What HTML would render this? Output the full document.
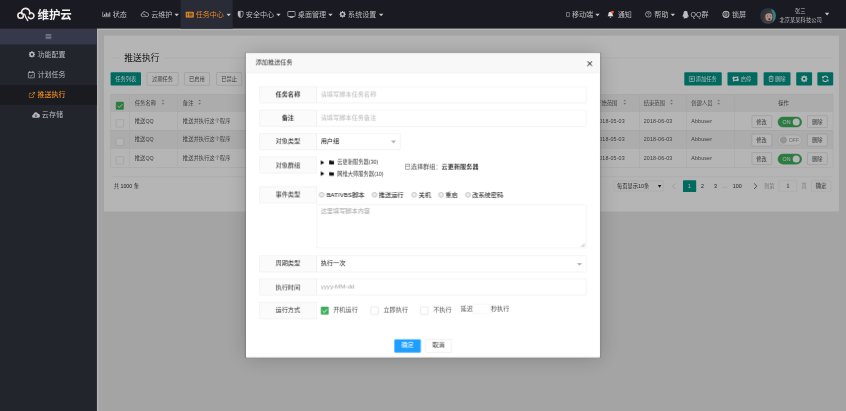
<!DOCTYPE html>
<html lang="zh-CN">
<head>
<meta charset="utf-8">
<title>维护云 - 推送执行</title>
<style>
*{box-sizing:border-box;margin:0;padding:0}
html,body{width:846px;height:411px;overflow:hidden;background:#23252d}
body{font-family:"Liberation Sans","Noto Sans CJK SC",sans-serif;color:#333}
#s{position:absolute;left:0;top:0;width:1920px;height:933px;transform:scale3d(0.440625,0.440625,1) rotateX(0.01deg);transform-origin:0 0}
#bg{left:200px;top:40px;width:1730px;height:900px;background:#e7e7e7}
.a{position:absolute;white-space:nowrap}
svg{display:block;position:absolute}
/* header */
#hd{left:0;top:0;width:1920px;height:65px;background:#1a1b22}
#hd .t{top:0;height:65px;line-height:66px;font-size:16px;color:#bcbcc0}
#hd .cr{width:0;height:0;border:5px solid transparent;border-top:6px solid #c4c4c8;border-bottom:none;top:31px}
#hd svg{top:24px}
/* side */
#sd{left:0;top:0;width:220px;height:940px;background:#23252d}
#tg{left:0;top:40px;width:220px;height:61px;background:#353949}
.si{left:0;width:220px;height:45px;line-height:46px;font-size:16px;color:#b9b9bd}
.si svg{top:15px}
.si.on{background:#1a1b21;color:#e88c22}
/* main */
#card{left:236px;top:81px;width:1668px;height:399px;background:#fff}
.btn{height:30px;line-height:30px;font-size:12px;color:#fff;background:#009688;text-align:center;border-radius:2px}
.btn.w{background:#fff;border:1px solid #c9c9c9;color:#555;line-height:28px}
.btn svg{top:7px}
.th{top:214px;height:39px;line-height:41px;font-size:12px;color:#555}
.td{height:42px;line-height:42px;font-size:12px;color:#555}
.en{letter-spacing:.35px}
.vl{top:214px;width:1px;height:166px;background:#e6e6e6}
.hl{left:251px;width:1640px;height:1px;background:#e6e6e6}
.cb{width:18px;height:18px;border:1px solid #d2d2d2;background:#fff;border-radius:2px}
.cb.on{background:#3fae5c;border-color:#3fae5c}
.sb{height:28px;line-height:28px;font-size:12px;border:1px solid #c9c9c9;background:#fff;color:#555;text-align:center;border-radius:2px;width:46px}
.sw{width:55px;height:24px;border-radius:12px;font-size:12px;line-height:22px}
.sw.on{background:#3fae5c;border:1px solid #3fae5c;color:#fff}
.sw.off{background:#fff;border:1px solid #d2d2d2;color:#999}
.sw i{position:absolute;top:3px;width:16px;height:16px;border-radius:8px}
.sw.on i{right:4px;background:#fff}
.sw.off i{left:4px;background:#d2d2d2}
.so{width:0;height:0}
.so:before,.so:after{content:"";position:absolute;left:0;border:3px solid transparent}
.so:before{top:-7px;border-bottom:4px solid #a0a0a0;border-top:none}
.so:after{top:1px;border-top:4px solid #a0a0a0;border-bottom:none}
.pg{top:409px;height:28px;line-height:28px;font-size:12px;color:#333}
#shade{left:220px;top:65px;width:1710px;height:880px;background:rgba(0,0,0,.29)}
/* modal */
#md{left:558px;top:121px;width:804px;height:690px;background:#fff;box-shadow:1px 1px 50px rgba(0,0,0,.2),0 0 3px rgba(0,0,0,.3);border-radius:2px}
#mi{left:2px;top:1.7px;width:800px;height:688px}
#mt{left:-2px;top:-1.7px;width:803px;height:44px;padding-top:1px;background:#f8f8f8;border-bottom:1px solid #eee;line-height:41px;font-size:14px;color:#333;padding-left:22px}
.lb{left:28px;width:131px;height:38px;line-height:35px;border:1px solid #e6e6e6;background:#fbfbfb;text-align:center;font-size:14px;color:#333;border-radius:2px 0 0 2px}
.in{left:158px;width:612.5px;height:38px;line-height:35px;border:1px solid #e6e6e6;background:#fff;font-size:14px;color:#bbb;padding-left:9px;border-radius:0 2px 2px 0}
.mx{font-size:14px;color:#444;height:38px;line-height:38px}
.rd{width:12px;height:12px;border-radius:50%;border:1px solid #8c8c8c;background:#ececec}
.dc{width:0;height:0;border:6px solid transparent;border-top:6px solid #b0b0b0;border-bottom:none}
</style>
</head>
<body>
<div id="s">
<div id="bg" class="a"></div>
<div class="a" style="left:220px;top:65px;width:1700px;height:3px;background:#fff"></div><div class="a" style="left:220px;top:65px;width:3px;height:870px;background:#fff"></div>
<div id="card" class="a"></div>
<!-- fieldset title -->
<div class="a" style="left:252px;top:131px;width:1638px;height:1px;background:#e6e6e6"></div>
<div class="a" style="left:272px;top:113px;height:36px;line-height:36px;padding:0 10px;background:#fff;font-size:20px;font-weight:400;color:#222">推送执行</div>
<!-- toolbar left -->
<div class="a btn" style="left:251px;top:164px;width:69px;height:30px;line-height:31px">任务列表</div>
<div class="a btn w" style="left:333px;top:164px;width:72px;height:30px;line-height:29px">过期任务</div>
<div class="a btn w" style="left:418px;top:164px;width:58px;height:30px;line-height:29px">已启用</div>
<div class="a btn w" style="left:491px;top:164px;width:58px;height:30px;line-height:29px">已禁止</div>
<!-- toolbar right -->
<div class="a btn" style="left:1553px;top:164px;width:85px;height:30px;line-height:31px;text-align:left;padding-left:26px"><svg style="left:10px;top:7.500px" width="14" height="14" viewBox="0 0 14 14"><rect x="0.900" y="0.900" width="12.200" height="12.200" rx="1.500" fill="none" stroke="#fff" stroke-width="1.700"/><path d="M7 3.300v7.400M3.300 7h7.400" stroke="#fff" stroke-width="1.700"/></svg>添加任务</div>
<div class="a btn" style="left:1651px;top:164px;width:68px;height:30px;line-height:31px;text-align:left;padding-left:30px"><svg style="left:10px;top:8px" width="17" height="14" viewBox="0 0 16 13"><path d="M3.600 12V3.400h7.200M12.400 1v8.600H5.200" fill="none" stroke="#fff" stroke-width="2.700"/><path d="M0 5.800L3.600 0.800l3.600 5zM16 7.200l-3.600 5l-3.600-5z" fill="#fff"/></svg>启停</div>
<div class="a btn" style="left:1733px;top:164px;width:61px;height:30px;line-height:31px;text-align:left;padding-left:26px"><svg style="left:11px;top:7px" width="12" height="15" viewBox="0 0 12 14"><path d="M0.500 3h11M4 3V1h4v2M1.800 3v9.500a1 1 0 0 0 1 1h6.400a1 1 0 0 0 1-1V3" fill="none" stroke="#fff" stroke-width="1.800"/><path d="M3.500 7.500h5" stroke="#fff" stroke-width="1.600"/></svg>删除</div>
<div class="a btn" style="left:1807px;top:164px;width:36px;height:30px"><svg style="left:10px;top:7px" width="16" height="16" viewBox="0 0 16 16"><circle cx="8" cy="8" r="4.600" fill="none" stroke="#fff" stroke-width="3.600"/><path d="M8 0v16M0 8h16M2.300 2.300l11.400 11.400M13.700 2.300L2.300 13.700" stroke="#fff" stroke-width="2.800" stroke-dasharray="2.600 10.800"/></svg></div>
<div class="a btn" style="left:1855px;top:164px;width:36px;height:30px"><svg style="left:10px;top:7px" width="16" height="16" viewBox="0 0 15 15"><path d="M13 6A5.800 5.800 0 0 0 2.500 4.500M2 9a5.800 5.800 0 0 0 10.500 1.500" fill="none" stroke="#fff" stroke-width="2.600"/><path d="M0.300 0.800v5.400h5.400zM14.700 14.200V8.800h-5.400z" fill="#fff"/></svg></div>
<!-- table -->
<div class="a" style="left:251px;top:214px;width:1640px;height:39px;background:#f2f2f2"></div>
<div class="a" style="left:251px;top:295px;width:1640px;height:42px;background:#f2f2f2"></div>
<div class="a hl" style="top:214px"></div><div class="a hl" style="top:253px"></div><div class="a hl" style="top:295px"></div><div class="a hl" style="top:337px"></div><div class="a hl" style="top:380px"></div>
<div class="a vl" style="left:251px"></div><div class="a vl" style="left:294px"></div><div class="a vl" style="left:403px"></div><div class="a vl" style="left:640px"></div><div class="a vl" style="left:790px"></div><div class="a vl" style="left:940px"></div><div class="a vl" style="left:1090px"></div><div class="a vl" style="left:1240px"></div><div class="a vl" style="left:1345px"></div><div class="a vl" style="left:1451px"></div><div class="a vl" style="left:1557px"></div><div class="a vl" style="left:1666px"></div><div class="a vl" style="left:1890px"></div>
<div class="a cb on" style="left:263px;top:231px"><svg style="left:2px;top:3px" width="13" height="11" viewBox="0 0 13 11"><path d="M1.500 5.500l3.500 3.500l6.500-7.500" fill="none" stroke="#fff" stroke-width="2"/></svg></div>
<div class="a cb" style="left:263px;top:271px"></div><div class="a cb" style="left:263px;top:313px"></div><div class="a cb" style="left:263px;top:355px"></div>
<div class="a th" style="left:306px">任务名称</div><div class="a so" style="left:367px;top:233px"></div>
<div class="a th" style="left:415px">备注</div><div class="a so" style="left:450px;top:233px"></div>
<div class="a th" style="left:652px">对象类型</div><div class="a th" style="left:802px">事件类型</div><div class="a th" style="left:952px">周期类型</div><div class="a th" style="left:1102px">执行时间</div><div class="a th" style="left:1252px">运行方式</div>
<div class="a th" style="left:1353px">开始范围</div><div class="a so" style="left:1415px;top:233px"></div>
<div class="a th" style="left:1461px">结束范围</div><div class="a so" style="left:1521px;top:233px"></div>
<div class="a th" style="left:1569px">创建人员</div><div class="a so" style="left:1628px;top:233px"></div>
<div class="a th" style="left:1766px">操作</div>
<!-- rows -->
<div class="a td" style="left:306px;top:254px">推送QQ</div><div class="a td" style="left:415px;top:254px">推送并执行这个程序</div><div class="a td" style="left:652px;top:254px">用户组</div><div class="a td" style="left:802px;top:254px">推送运行</div><div class="a td" style="left:952px;top:254px">执行一次</div><div class="a td" style="left:1102px;top:254px">2018-05-03</div><div class="a td" style="left:1252px;top:254px">开机运行</div><div class="a td en" style="left:1353px;top:254px">2018-05-03</div><div class="a td en" style="left:1461px;top:254px">2018-06-03</div><div class="a td en" style="left:1569px;top:254px">Abbuser</div>
<div class="a td" style="left:306px;top:296px">推送QQ</div><div class="a td" style="left:415px;top:296px">推送并执行这个程序</div><div class="a td" style="left:652px;top:296px">用户组</div><div class="a td" style="left:802px;top:296px">推送运行</div><div class="a td" style="left:952px;top:296px">执行一次</div><div class="a td" style="left:1102px;top:296px">2018-05-03</div><div class="a td" style="left:1252px;top:296px">开机运行</div><div class="a td en" style="left:1353px;top:296px">2018-05-03</div><div class="a td en" style="left:1461px;top:296px">2018-06-03</div><div class="a td en" style="left:1569px;top:296px">Abbuser</div>
<div class="a td" style="left:306px;top:338px">推送QQ</div><div class="a td" style="left:415px;top:338px">推送并执行这个程序</div><div class="a td" style="left:652px;top:338px">用户组</div><div class="a td" style="left:802px;top:338px">推送运行</div><div class="a td" style="left:952px;top:338px">执行一次</div><div class="a td" style="left:1102px;top:338px">2018-05-03</div><div class="a td" style="left:1252px;top:338px">开机运行</div><div class="a td en" style="left:1353px;top:338px">2018-05-03</div><div class="a td en" style="left:1461px;top:338px">2018-06-03</div><div class="a td en" style="left:1569px;top:338px">Abbuser</div>
<!-- ops -->
<div class="a sb" style="left:1705.500px;top:262px">修改</div><div class="a sw on" style="left:1765px;top:264.5px;padding-left:10px">ON<i></i></div><div class="a sb" style="left:1832px;top:262px">删除</div>
<div class="a sb" style="left:1705.500px;top:304px">修改</div><div class="a sw off" style="left:1765px;top:306px;padding-left:24px">OFF<i></i></div><div class="a sb" style="left:1832px;top:304px">删除</div>
<div class="a sb" style="left:1705.500px;top:346px">修改</div><div class="a sw on" style="left:1765px;top:348.5px;padding-left:10px">ON<i></i></div><div class="a sb" style="left:1832px;top:346px">删除</div>
<!-- footer -->
<div class="a" style="left:252px;top:401px;width:1638px;height:1px;background:#e6e6e6"></div>
<div class="a pg" style="left:258px">共 1000 条</div>
<div class="a pg" style="left:1393px;top:410px;width:113px;height:24px;line-height:22px;border:1px solid #e2e2e2;background:#fff;padding-left:6px;border-radius:2px">每页显示10条</div>
<div class="a" style="left:1493px;top:420px;width:0;height:0;border:4px solid transparent;border-top:6px solid #222;border-bottom:none"></div>
<svg style="left:1525px;top:415px" width="9" height="15" viewBox="0 0 9 15"><path d="M7.500 1L1.500 7.500l6 6.500" fill="none" stroke="#d2d2d2" stroke-width="1.600"/></svg>
<div class="a pg" style="left:1550px;width:30px;height:27px;line-height:27px;background:#009688;color:#fff;text-align:center;border-radius:2px">1</div>
<div class="a pg" style="left:1584px;width:20px;text-align:center">2</div>
<div class="a pg" style="left:1614px;width:20px;text-align:center">3</div>
<div class="a pg" style="left:1635px;width:20px;text-align:center;color:#999">…</div>
<div class="a pg" style="left:1658px;width:30px;text-align:center">100</div>
<svg style="left:1710px;top:415px" width="9" height="15" viewBox="0 0 9 15"><path d="M1.500 1l6 6.500l-6 6.500" fill="none" stroke="#333" stroke-width="1.600"/></svg>
<div class="a pg" style="left:1734px;color:#aaa">到第</div>
<div class="a pg" style="left:1767px;top:409px;width:42px;height:26px;line-height:24px;border:1px solid #e2e2e2;background:#fff;text-align:center;border-radius:2px">1</div>
<div class="a pg" style="left:1819px;color:#aaa">页</div>
<div class="a pg" style="left:1841px;top:409px;width:45px;height:26px;line-height:24px;border:1px solid #e2e2e2;background:#fff;text-align:center;border-radius:2px">确定</div>

<div id="shade" class="a"></div>
<div id="md" class="a"><div id="mi" class="a">
  <div id="mt" class="a">添加推送任务</div>
  <svg style="left:771.500px;top:15px" width="13" height="13" viewBox="0 0 12 12"><path d="M1 1l10 10M11 1L1 11" stroke="#111" stroke-width="2"/></svg>
  <!-- row1 -->
  <div class="a lb" style="top:73.5px;font-weight:500;color:#111">任务名称</div><div class="a in" style="top:73.5px">请填写脚本任务名称</div>
  <!-- row2 -->
  <div class="a lb" style="top:126.5px;font-weight:500;color:#111">备注</div><div class="a in" style="top:126.5px">请填写脚本任务备注</div>
  <!-- row3 -->
  <div class="a lb" style="top:179.5px">对象类型</div><div class="a in" style="top:179.5px;width:191px;color:#111">用户组</div>
  <div class="a dc" style="left:327px;top:196px"></div>
  <!-- row4 -->
  <div class="a lb" style="top:232.5px;line-height:37px">对象群组</div>
  <div class="a" style="left:168px;top:241px;width:0;height:0;border:5px solid transparent;border-left:8px solid #000;border-right:none"></div>
  <svg style="left:187px;top:241px" width="11" height="9" viewBox="0 0 11 9"><path d="M0 0h4.200l1 1.400H11V9H0z" fill="#111"/></svg>
  <div class="a" style="left:205px;top:236px;font-size:12px;line-height:18px;color:#333">云更新服务器(30)</div>
  <div class="a" style="left:168px;top:266px;width:0;height:0;border:5px solid transparent;border-left:8px solid #000;border-right:none"></div>
  <svg style="left:187px;top:267px" width="11" height="9" viewBox="0 0 11 9"><path d="M0 0h4.200l1 1.400H11V9H0z" fill="#111"/></svg>
  <div class="a" style="left:205px;top:262px;font-size:12px;line-height:18px;color:#333">网维大师服务器(10)</div>
  <div class="a mx" style="left:358px;top:235px;color:#555">已选择群组：<span style="color:#111;font-weight:500">云更新服务器</span></div>
  <!-- row5 -->
  <div class="a lb" style="top:300.5px">事件类型</div>
  <div class="a rd" style="left:164px;top:313px"></div><div class="a mx" style="left:181px;top:299px;color:#111">BAT/VBS脚本</div>
  <div class="a rd" style="left:284px;top:313px"></div><div class="a mx" style="left:300px;top:299px;color:#111">推送运行</div>
  <div class="a rd" style="left:374px;top:313px"></div><div class="a mx" style="left:390px;top:299px;color:#111">关机</div>
  <div class="a rd" style="left:435px;top:313px"></div><div class="a mx" style="left:451px;top:299px;color:#111">重启</div>
  <div class="a rd" style="left:496px;top:313px"></div><div class="a mx" style="left:512px;top:299px;color:#111">改系统密码</div>
  <div class="a in" style="top:341.500px;height:99px;line-height:20px;padding-top:3px;border-radius:2px;color:#a6a6a6">这里填写脚本内容</div>
  <svg style="left:758px;top:428px" width="10" height="10" viewBox="0 0 10 10"><path d="M9.500 1L1 9.500M9.500 5.500l-4 4" stroke="#8a8a8a" stroke-width="1.200"/></svg>
  <!-- row6 -->
  <div class="a lb" style="top:457px;line-height:33px">周期类型</div><div class="a in" style="top:457px;color:#111;line-height:33px">执行一次</div>
  <div class="a dc" style="left:749px;top:474px"></div>
  <!-- row7 -->
  <div class="a lb" style="top:509.500px;line-height:37px">执行时间</div><div class="a in" style="top:509.500px;color:#a2a2a2">yyyy-MM-dd</div>
  <!-- row8 -->
  <div class="a lb" style="top:563px;line-height:33px">运行方式</div>
  <div class="a cb on" style="left:168px;top:573px"><svg style="left:2px;top:3px" width="13" height="11" viewBox="0 0 13 11"><path d="M1.500 5.500l3.500 3.500l6.500-7.500" fill="none" stroke="#fff" stroke-width="2"/></svg></div><div class="a mx" style="left:196px;top:561px;color:#555">开机运行</div>
  <div class="a cb" style="left:281px;top:573px"></div><div class="a mx" style="left:310px;top:561px;color:#555">立即执行</div>
  <div class="a cb" style="left:394px;top:573px"></div><div class="a mx" style="left:423px;top:561px;color:#555">不执行</div>
  <div class="a mx" style="left:485px;top:558.500px;color:#555">延迟</div>
  <div class="a" style="left:513px;top:567px;width:40px;height:22px;border:1px solid #ededed;background:#fff"></div>
  <div class="a mx" style="left:554px;top:558.500px;color:#555">秒执行</div>
  <!-- buttons -->
  <div class="a" style="left:335px;top:647px;width:60px;height:30px;line-height:26px;background:#1e9fff;color:#fff;font-size:14px;text-align:center;border-radius:2px">确定</div>
  <div class="a" style="left:405px;top:647px;width:60px;height:30px;line-height:24px;background:#fff;border:1px solid #dedede;color:#333;font-size:14px;text-align:center;border-radius:2px">取消</div>
</div></div>
<div id="sd" class="a">
  <div id="tg" class="a"><svg style="left:103px;top:37px" width="14" height="12" viewBox="0 0 14 12"><path d="M0 1h14M0 4.4h14M0 7.8h14M0 11.2h14" stroke="#8d92a3" stroke-width="1.8"/></svg></div>
  <div class="a si" style="top:101px"><svg style="left:65px" width="15" height="15" viewBox="0 0 16 16"><circle cx="8" cy="8" r="4.6" fill="none" stroke="#b9b9bd" stroke-width="3.4"/><path d="M8 0v16M0 8h16M2.3 2.3l11.4 11.4M13.7 2.3L2.3 13.7" stroke="#b9b9bd" stroke-width="2.6" stroke-dasharray="2.6 10.8"/></svg><span class="a" style="left:85px">功能配置</span></div>
  <div class="a si" style="top:147px"><svg style="left:63px;top:14px" width="16" height="17" viewBox="0 0 16 17"><rect x="1" y="3" width="14" height="13" rx="1.5" fill="none" stroke="#b9b9bd" stroke-width="2"/><path d="M4.5 0.5v4M11.5 0.5v4" stroke="#b9b9bd" stroke-width="2"/><path d="M5 10l2.2 2.2L11 8.4" fill="none" stroke="#b9b9bd" stroke-width="1.8"/></svg><span class="a" style="left:85px">计划任务</span></div>
  <div class="a si on" style="top:193px"><svg style="left:65px;top:15px" width="15" height="15" viewBox="0 0 18 17"><path d="M13 10v4.5a1.5 1.5 0 0 1-1.5 1.500h-9a1.500 1.500 0 0 1-1.500-1.500v-9a1.500 1.500 0 0 1 1.500-1.500h5" fill="none" stroke="#e58a24" stroke-width="2"/><path d="M10.500 1h6.500v6.500M17 1L8 10" fill="none" stroke="#e58a24" stroke-width="2.200"/></svg><span class="a" style="left:85px;font-weight:500">推送执行</span></div>
  <div class="a si" style="top:238px"><svg style="left:72px;top:16px" width="19" height="14" viewBox="0 0 19 14"><path d="M4.500 13.500a4 4 0 0 1-0.600-7.900a5.500 5.500 0 0 1 10.600-1.200a4.600 4.600 0 0 1 0.500 9.100z" fill="#b9b9bd"/><path d="M9.500 5v5.500M7 8.200l2.500 2.600l2.500-2.600" fill="none" stroke="#23252d" stroke-width="1.600"/></svg><span class="a" style="left:95px">云存储</span></div>
</div>

<div id="hd" class="a">
  <!-- logo -->
  <svg style="left:36px;top:14px" width="46" height="36" viewBox="36 14 46 36"><g fill="none" stroke="#f0e7e3" stroke-width="3.600" stroke-linecap="round"><circle cx="46.800" cy="35.300" r="6.300"/><path d="M49 31 A9.500 9.500 0 1 1 67.200 31.500"/><path d="M67.200 30 A6.600 6.600 0 1 1 64.500 38.500"/><path d="M55.800 32 C57.500 38 60 43 63 46.500" stroke-width="3"/></g></svg>
  <div class="a" style="left:85px;top:2px;height:65px;line-height:65px;font-size:26px;font-weight:700;color:#f1f1f1">维护云</div>
  <!-- active tab -->
  <div class="a" style="left:410px;top:0;width:118px;height:65px;background:#292b36"></div>
  <!-- 状态 -->
  <svg style="left:232px;top:26px" width="19" height="13" viewBox="0 0 19 16" preserveAspectRatio="none"><path d="M1 0v15h18" fill="none" stroke="#bcbcc0" stroke-width="2"/><path d="M4 8h2.6v5H4zM8 3h2.6v10H8zM12 6h2.6v7H12zM16 2h2.4v11H16z" fill="#bcbcc0"/></svg>
  <div class="a t" style="left:256px">状态</div>
  <!-- 云维护 -->
  <svg style="left:318px;top:25px" width="21" height="15" viewBox="0 0 42 33"><path d="M13 27.5 H10.5 A8 8 0 0 1 9.5 11.6 A9.5 9.5 0 0 1 27.5 8.6 A8 8 0 0 1 38.5 16.2 A7.2 7.2 0 0 1 31.5 27.5 H26" fill="none" stroke="#bcbcc0" stroke-width="4.2" stroke-linecap="round"/><path d="M14 15.5 C20 15 23.5 19 23 23.5 C22.6 27 21 29.5 18 31" fill="none" stroke="#bcbcc0" stroke-width="3.6" stroke-linecap="round"/></svg>
  <div class="a t" style="left:343px">云维护</div>
  <div class="a cr" style="left:396px"></div>
  <!-- 任务中心 -->
  <svg style="left:421px;top:26px" width="19" height="14" viewBox="0 0 19 14"><rect x="0" y="0" width="19" height="14" rx="2" fill="#e58a24"/><path d="M3 4h3M8 4h8M3 7h3M8 7h8M3 10h3M8 10h8" stroke="#292b36" stroke-width="1.6"/></svg>
  <div class="a t" style="left:444px;color:#e58a24">任务中心</div>
  <div class="a cr" style="left:514px"></div>
  <!-- 安全中心 -->
  <svg style="left:539px" width="14" height="17" viewBox="0 0 14 17"><path d="M7 0.8 L13 2.6 V8.5 C13 12.5 10 15 7 16.3 C4 15 1 12.5 1 8.5 V2.6 Z" fill="none" stroke="#bcbcc0" stroke-width="1.8"/><path d="M7 0.8 V16.3 C4 15 1 12.5 1 8.5 V2.6 Z" fill="#bcbcc0"/></svg>
  <div class="a t" style="left:558px">安全中心</div>
  <div class="a cr" style="left:627px"></div>
  <!-- 桌面管理 -->
  <svg style="left:652px;top:25px" width="19" height="16" viewBox="0 0 19 16"><rect x="1" y="1" width="17" height="11.5" rx="1.5" fill="none" stroke="#bcbcc0" stroke-width="2"/><path d="M5.5 15h8" stroke="#bcbcc0" stroke-width="2"/></svg>
  <div class="a t" style="left:676px">桌面管理</div>
  <div class="a cr" style="left:745px"></div>
  <!-- 系统设置 -->
  <svg style="left:770px;top:25px" width="15" height="15" viewBox="0 0 16 16"><circle cx="8" cy="8" r="4.6" fill="none" stroke="#bcbcc0" stroke-width="3.4"/><path d="M8 0v16M0 8h16M2.3 2.3l11.4 11.4M13.7 2.3L2.3 13.7" stroke="#bcbcc0" stroke-width="2.6" stroke-dasharray="2.6 10.8"/></svg>
  <div class="a t" style="left:790px">系统设置</div>
  <div class="a cr" style="left:860px"></div>
  <!-- 移动端 -->
  <svg style="left:1285px;top:27px" width="8" height="12" viewBox="0 0 8 12"><rect x="0.8" y="0.8" width="6.4" height="10.4" rx="1" fill="none" stroke="#bcbcc0" stroke-width="1.6"/></svg>
  <div class="a t" style="left:1298px">移动端</div>
  <div class="a cr" style="left:1351px"></div>
  <!-- 通知 -->
  <svg style="left:1378px;top:23px" width="17" height="18" viewBox="0 0 17 18"><path d="M7.5 3.5 C4 3.8 2.8 6.5 2.8 9 C2.8 12 1.5 13 0.8 14 H14.2 C13.5 13 12.2 12 12.2 9 C12.2 6.5 11 3.8 7.5 3.5Z" fill="#dcdcdc"/><path d="M5.5 15.2a2 2 0 0 0 4 0z" fill="#dcdcdc"/><circle cx="12" cy="4.500" r="3.300" fill="#f4511e"/></svg>
  <div class="a t" style="left:1402px">通知</div>
  <!-- 帮助 -->
  <svg style="left:1464px;top:25px" width="15" height="15" viewBox="0 0 15 15"><circle cx="7.5" cy="7.5" r="6.5" fill="none" stroke="#bcbcc0" stroke-width="1.7"/><path d="M5.4 6 C5.4 3.3 9.6 3.3 9.6 6 C9.6 7.5 7.5 7.6 7.5 9.3" fill="none" stroke="#bcbcc0" stroke-width="1.5"/><rect x="6.7" y="10.2" width="1.6" height="1.6" fill="#bcbcc0"/></svg>
  <div class="a t" style="left:1485px">帮助</div>
  <div class="a cr" style="left:1522px"></div>
  <!-- QQ群 -->
  <svg style="left:1548px;top:24px" width="16" height="18" viewBox="0 0 16 18"><path d="M8 0.5 C4.6 0.5 3.4 3 3.4 6 C3.4 7 3.3 7.6 2.6 8.8 C1.4 10.6 0.6 12.5 1 14.2 C1.4 14.6 2.2 13.6 2.8 12.8 C3 14 3.6 15 4.4 15.7 C3.6 16 3 16.4 3 17 C3 17.7 5.5 17.8 8 17.8 C10.5 17.8 13 17.7 13 17 C13 16.4 12.4 16 11.6 15.7 C12.4 15 13 14 13.2 12.8 C13.8 13.6 14.6 14.6 15 14.2 C15.4 12.5 14.6 10.6 13.4 8.8 C12.7 7.6 12.6 7 12.6 6 C12.6 3 11.4 0.5 8 0.5Z" fill="#bcbcc0"/></svg>
  <div class="a t" style="left:1567px">QQ群</div>
  <!-- 锁屏 -->
  <svg style="left:1639px;top:24px" width="17" height="17" viewBox="0 0 17 17"><circle cx="8.500" cy="8.500" r="7" fill="none" stroke="#b9b9bd" stroke-width="2.600"/><rect x="6.300" y="4.600" width="4.400" height="7.800" rx="2" fill="none" stroke="#b9b9bd" stroke-width="2"/></svg>
  <div class="a t" style="left:1661px">锁屏</div>
  <!-- avatar -->
  <svg style="left:1725px;top:18px" width="36" height="36" viewBox="0 0 36 36"><defs><clipPath id="av"><circle cx="18" cy="18" r="18"/></clipPath></defs><g clip-path="url(#av)"><rect width="36" height="36" fill="#2b3440"/><rect x="26" y="0" width="10" height="36" fill="#2f7f86"/><path d="M8 36 C6 22 8 8 20 7 C30 7 31 18 29 28 L27 36Z" fill="#4a3a36"/><ellipse cx="20" cy="20" rx="8" ry="9.500" fill="#a88e88"/><path d="M11 16 C12 8 26 6 29 15 C24 11 16 11 11 16Z" fill="#3a2d2b"/><ellipse cx="21" cy="25.500" rx="2.200" ry="2.800" fill="#5d2f30"/><circle cx="17" cy="18.500" r="1.100" fill="#2a2020"/><circle cx="24" cy="18.500" r="1.100" fill="#2a2020"/><path d="M0 36 L4 30 L32 30 L36 36Z" fill="#39424d"/></g></svg>
  <div class="a" style="left:1804px;top:17px;font-size:12px;line-height:18px;color:#bcbcc0">张三</div>
  <div class="a" style="left:1769px;top:36px;font-size:12px;line-height:18px;color:#bcbcc0">北京某某科技公司</div>
  <div class="a cr" style="left:1872px;top:29px"></div>
</div>

</div>
</body>
</html>
